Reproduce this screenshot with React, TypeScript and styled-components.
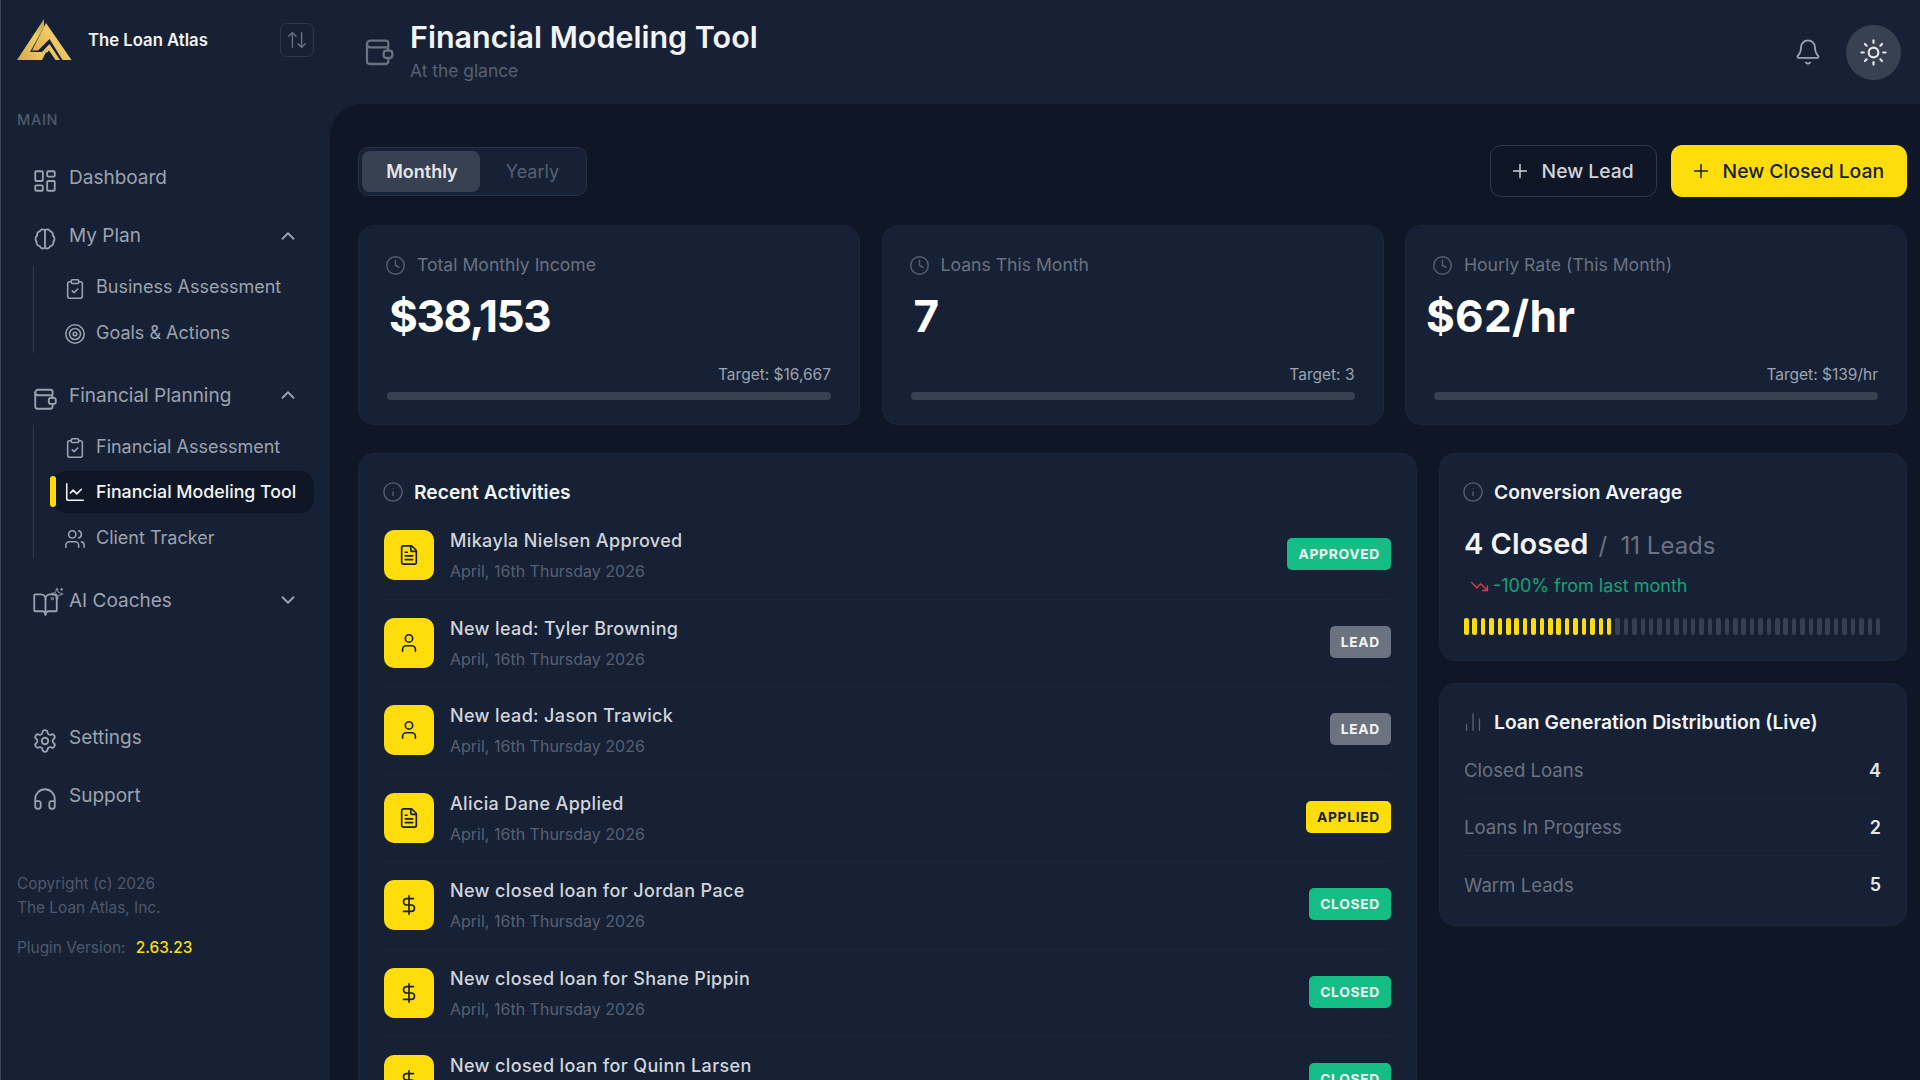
import React from 'react';
import styled, { createGlobalStyle } from 'styled-components';
import {
  LayoutDashboard, ClipboardCheck, Target, ChevronUp, ChevronDown, ChartLine, Users,
  Settings, Headphones, ArrowUpDown, Bell, Sun, Plus, Clock, Info, FileText, User, DollarSign,
  TrendingDown, ChartNoAxesColumn, BookOpen, Sparkles,
} from 'lucide-react';

const Global = createGlobalStyle`
  html, body { margin: 0; padding: 0; height: 100%; overflow: hidden; background: #162135; }
  body { font-family: Inter, "Liberation Sans", sans-serif; }
  * { box-sizing: border-box; }
`;

const Shell = styled.div`
  display: flex; width: 1920px; height: 1080px; overflow: hidden; background: #162135;
  border-left: 1px solid #3a4557;
`;

/* ---------- sidebar ---------- */
const Sidebar = styled.aside`
  width: 329px; flex: none; display: flex; flex-direction: column; padding: 0 16px;
`;
const Brand = styled.div`
  display: flex; align-items: center; height: 80px;
`;
const LogoMark = styled.svg`
  width: 55px; height: 42px; flex: none;
`;
const BrandName = styled.span`
  margin-left: 16px; font-size: 16.7px; font-weight: 600; color: #f3f4f6; flex: 1;
`;
const Toggle = styled.button`
  width: 34px; height: 34px; border: 1px solid #2d3a4e; border-radius: 7px;
  background: transparent; color: #6b7280; display: flex; align-items: center; justify-content: center; padding: 0;
`;
const SectionLabel = styled.div`
  margin-top: 31px; font-size: 14.5px; line-height: 18px; font-weight: 500; letter-spacing: 0.7px; color: #4f5a6c;
`;
const NavList = styled.nav`
  display: flex; flex-direction: column; margin-top: 23px;
`;
const NavRow = styled.div`
  display: flex; align-items: center; height: 58px; padding-left: 15px; color: #9ca3af; font-size: 19px;
  font-weight: 400;
  & > span { flex: 1; margin-left: 11px; margin-top: -7px; }
  & > svg:first-child { flex: none; }
`;
const Caret = styled.div`
  width: 22px; margin-right: 15px; display: flex; color: #9ca3af; margin-top: -7px;
`;
const SubList = styled.div`
  margin-left: 16px; padding-left: 18px; border-left: 1px solid #2d3a4e; display: flex; flex-direction: column;
  gap: 3.5px; margin-top: -2.5px; margin-bottom: 16.5px;
`;
const SubRow = styled.div<{ $active?: boolean }>`
  position: relative; display: flex; align-items: center; gap: 10px; height: 42px; padding-left: 12px;
  font-size: ${(p) => (p.$active ? '17.75px' : '18px')}; border-radius: 14px;
  background: ${(p) => (p.$active ? '#0f1626' : 'transparent')};
  color: ${(p) => (p.$active ? '#f3f4f6' : '#9ca3af')};
  font-weight: ${(p) => (p.$active ? 500 : 400)};
  & > svg { flex: none; margin-top: ${(p) => (p.$active ? '1px' : '4px')}; }
`;
const ActiveBar = styled.i`
  position: absolute; left: -2px; top: 5px; width: 6px; height: 31px; border-radius: 3px; background: #ffdd0a;
`;
const BottomNav = styled.div`
  display: flex; flex-direction: column; margin-top: 79px;
`;
const Legal = styled.div`
  margin-top: 44px; font-size: 15.4px; line-height: 24px; color: #4f5a6c;
`;
const Version = styled.div`
  margin-top: 16px; font-size: 15.4px; line-height: 24px; color: #4f5a6c;
  b { font-weight: 500; color: #ffdd0a; margin-left: 6px; }
`;
const NavGlyph = styled.svg`
  fill: none; stroke: currentColor; stroke-linecap: round; stroke-linejoin: round; flex: none;
`;

/* ---------- main ---------- */
const Main = styled.div`
  flex: 1; min-width: 0; display: flex; flex-direction: column;
`;
const TopBar = styled.header`
  height: 104px; flex: none; display: flex; align-items: center; padding: 0 19px 0 33px; color: #6b7280;
`;
const TitleBlock = styled.div`
  flex: 1; margin-left: 15px; margin-top: -3px;
`;
const Title = styled.h1`
  margin: 0; font-size: 30.5px; line-height: 38px; font-weight: 600; color: #f3f4f6;
`;
const Subtitle = styled.div`
  margin-top: 3px; font-size: 17.4px; line-height: 24px; color: #566072;
`;
const ThemeButton = styled.div`
  width: 55px; height: 55px; border-radius: 50%; background: #374151; color: #e5e7eb;
  display: flex; align-items: center; justify-content: center; margin-left: 24px;
`;
const Content = styled.main`
  flex: 1; min-height: 0; background: #0f1626; border-top-left-radius: 32px; padding: 41px 13px 0 28px;
  overflow: hidden;
`;
const Toolbar = styled.div`
  display: flex; align-items: center; justify-content: space-between; height: 52px;
`;
const Tabs = styled.div`
  width: 229px; height: 49px; border: 1px solid #263247; border-radius: 10px; background: #162135; padding: 3px;
  display: flex; align-items: stretch;
`;
const Tab = styled.div<{ $on?: boolean }>`
  width: ${(p) => (p.$on ? '119px' : '104px')}; border-radius: 8px; display: flex; align-items: center; justify-content: center;
  padding-left: 2px; font-size: 18px; font-weight: ${(p) => (p.$on ? 600 : 400)};
  background: ${(p) => (p.$on ? '#374151' : 'transparent')};
  color: ${(p) => (p.$on ? '#e5e7eb' : '#566072')};
`;
const Actions = styled.div`
  display: flex; gap: 14px;
`;
const ActionBtn = styled.button<{ $primary?: boolean }>`
  height: 52px; display: flex; align-items: center; gap: 11px; padding: 0 22px 0 18px; border-radius: 11px;
  font: 500 19.3px Inter, sans-serif; white-space: nowrap;
  border: 1px solid ${(p) => (p.$primary ? '#ffdd0a' : '#2d3a4e')};
  background: ${(p) => (p.$primary ? '#ffdd0a' : 'transparent')};
  color: ${(p) => (p.$primary ? '#162135' : '#d1d5db')};
`;
const Stats = styled.section`
  display: grid; grid-template-columns: repeat(3, 1fr); gap: 21.5px; margin-top: 28px;
`;
const Card = styled.div`
  background: #162135; border: 1px solid #1c2739; border-radius: 16px;
`;
const StatCard = styled(Card)`
  height: 200px; padding: 28px 28px 0;
`;
const StatLabel = styled.div`
  display: flex; align-items: center; gap: 11px; font-size: 17.6px; line-height: 22px; color: #6b7280;
  & > svg { margin-left: -2px; flex: none; }
`;
const StatValue = styled.div<{ $offset: number; $track: number }>`
  margin-top: 13px; margin-left: ${(p) => p.$offset}px; letter-spacing: ${(p) => p.$track}px;
  font-size: 44px; line-height: 54px; font-weight: 700; color: #fff;
`;
const TargetText = styled.div`
  margin-top: 22px; text-align: right; font-size: 15.5px; line-height: 20px; color: #9ca3af;
`;
const Track = styled.div`
  margin-top: 7px; height: 8px; border-radius: 4px; background: #374151;
`;
const Lower = styled.section`
  display: grid; grid-template-columns: 1059px 1fr; gap: 22px; margin-top: 28px; align-items: start;
`;
const Activities = styled(Card)`
  padding: 25px 25px 0; height: 800px;
`;
const CardHead = styled.div`
  display: flex; align-items: center; gap: 10px; font-size: 19.25px; line-height: 26px; font-weight: 600; color: #f3f4f6;
  & > svg { margin-left: -2px; flex: none; }
`;
const ActivityRow = styled.div`
  height: 87.5px; display: flex; align-items: flex-start; border-bottom: 1px solid #1c2739;
  padding-bottom: 20px;
  & + & { padding-top: 18px; }
  &:first-of-type { height: 69.5px; }
`;
const Rows = styled.div`
  margin-top: 25px;
`;
const Tile = styled.div`
  width: 50px; height: 50px; border-radius: 10px; background: #ffdd0a; color: #162135; flex: none;
  display: flex; align-items: center; justify-content: center;
`;
const ActivityText = styled.div`
  flex: 1; margin-left: 16px; margin-top: -1px;
`;
const ActivityTitle = styled.div`
  font-size: 18px; line-height: 24px; font-weight: 500; letter-spacing: 0.36px; color: #d1d5db;
`;
const ActivityDate = styled.div`
  margin-top: 7px; font-size: 16px; line-height: 22px; color: #566072;
`;
const Badge = styled.span<{ $kind: string }>`
  margin-top: 8px; height: 32px; display: inline-flex; align-items: center; padding: 0 11px; border-radius: 5px;
  font-size: 13.8px; font-weight: 700; letter-spacing: 0.7px;
  background: ${(p) => (p.$kind === 'APPLIED' ? '#ffdd0a' : p.$kind === 'LEAD' ? '#6b7280' : '#14bd84')};
  color: ${(p) => (p.$kind === 'APPLIED' ? '#162135' : '#f3f4f6')};
`;
const Side = styled.div`
  display: flex; flex-direction: column; gap: 22px;
`;
const ConvCard = styled(Card)`
  height: 208px; padding: 25px 25px 0 24px;
`;
const Closed = styled.div`
  display: flex; align-items: baseline; margin-top: 20px; font-size: 29px; line-height: 38px; font-weight: 600; color: #f3f4f6;
  span { margin-left: 10px; font-size: 24px; font-weight: 400; color: #6b7280; }
`;
const Delta = styled.div`
  display: flex; align-items: center; gap: 4px; margin-top: 9px; padding-left: 6px; font-size: 18px; line-height: 24px; color: #11a577;
`;
const Ticks = styled.div`
  margin-top: 20px; display: flex; justify-content: space-between;
`;
const Tick = styled.i<{ $on: boolean }>`
  width: 4.5px; height: 17px; border-radius: 2px; background: ${(p) => (p.$on ? '#ffdd0a' : '#374151')};
`;
const DistCard = styled(Card)`
  height: 243px; padding: 25px 25px 0 24px;
`;
const DistRow = styled.div`
  display: flex; justify-content: space-between; align-items: center; height: 57px; font-size: 18.6px; color: #6b7280;
  border-bottom: 1px solid #1c2739;
  &:last-child { border-bottom: 0; }
  b { font-weight: 600; color: #e5e7eb; font-size: 18px; }
`;
const DistRows = styled.div`
  margin-top: 7px;
`;
const CoachIcon = styled.div`
  position: relative; width: 26px; height: 26px; flex: none; display: flex;
  & > svg:first-child { flex: none; }
  & > svg:last-child { position: absolute; top: -4px; right: -6px; }
`;

const activities = [
  ['Mikayla Nielsen Approved', 'APPROVED', 'doc'],
  ['New lead: Tyler Browning', 'LEAD', 'user'],
  ['New lead: Jason Trawick', 'LEAD', 'user'],
  ['Alicia Dane Applied', 'APPLIED', 'doc'],
  ['New closed loan for Jordan Pace', 'CLOSED', 'money'],
  ['New closed loan for Shane Pippin', 'CLOSED', 'money'],
  ['New closed loan for Quinn Larsen', 'CLOSED', 'money'],
];

const stats = [
  ['Total Monthly Income', '$38,153', 'Target: $16,667', 2, -1.4],
  ['Loans This Month', '7', 'Target: 3', 3, 0],
  ['Hourly Rate (This Month)', '$62/hr', 'Target: $139/hr', -8, 0.3],
] as const;

const Logo = () => (
  <LogoMark viewBox="0 0 55 42">
    <defs>
      <linearGradient id="gold" x1="0" y1="1" x2="1" y2="0">
        <stop offset="0" stopColor="#d8a83f" />
        <stop offset="0.6" stopColor="#f0cc68" />
        <stop offset="1" stopColor="#c99a3a" />
      </linearGradient>
    </defs>
    <path d="M27 0 L0 41 H25 L29 33 H13 L27 8 Z" fill="url(#gold)" />
    <path d="M29 4 L54.5 41 H45.5 L32.5 20 L21 31.5 H15 Z" fill="url(#gold)" />
    <path d="M32.5 25 L43 41 H38.5 L32 31.5 L30 33.5 H24.5 Z" fill="url(#gold)" />
  </LogoMark>
);

const BrainGlyph = () => (
  <NavGlyph width={26} height={26} viewBox="0 0 24 24" strokeWidth={1.7}>
    <path d="M12 4v16" />
    <path d="M12 4c-1.700-1.500-4.300-1-4.800 1C5.500 5.300 4.300 7 4.800 8.800 3 10 2.700 13 4.300 14.400c-.6 2.200 1 4.100 3 4.200.6 2.200 3.200 2.800 4.700 1.400" />
    <path d="M12 4c1.700-1.500 4.300-1 4.800 1 1.700.3 2.900 2 2.400 3.800C21 10 21.300 13 19.700 14.400c.6 2.200-1 4.100-3 4.200-.6 2.200-3.200 2.800-4.700 1.400" />
  </NavGlyph>
);

const WalletGlyph = ({ size }: { size: number }) => (
  <NavGlyph width={size} height={size} viewBox="0 0 24 24" strokeWidth={1.7}>
    <path d="M19 8V5.500a2 2 0 0 0-2-2H5.500A2.500 2.500 0 0 0 3 6v13a2 2 0 0 0 2 2h12a2 2 0 0 0 2-2v-2" />
    <path d="M3 6a2.500 2.500 0 0 0 2.500 2.500H17a2 2 0 0 1 2 2v.5" />
    <rect x="15.500" y="11" width="6.500" height="5.500" rx="2" />
  </NavGlyph>
);

export default function App() {
  return (
    <Shell>
      <Global />
      <Sidebar>
        <Brand>
          <Logo />
          <BrandName>The Loan Atlas</BrandName>
          <Toggle><ArrowUpDown size={22} strokeWidth={1.5} /></Toggle>
        </Brand>
        <SectionLabel>MAIN</SectionLabel>
        <NavList>
          <NavRow><LayoutDashboard size={26} strokeWidth={1.7} /><span>Dashboard</span></NavRow>
          <NavRow><BrainGlyph /><span>My Plan</span><Caret><ChevronUp size={22} /></Caret></NavRow>
          <SubList>
            <SubRow><ClipboardCheck size={22} strokeWidth={1.7} />Business Assessment</SubRow>
            <SubRow><Target size={22} strokeWidth={1.7} />Goals &amp; Actions</SubRow>
          </SubList>
          <NavRow><WalletGlyph size={26} /><span>Financial Planning</span><Caret><ChevronUp size={22} /></Caret></NavRow>
          <SubList>
            <SubRow><ClipboardCheck size={22} strokeWidth={1.7} />Financial Assessment</SubRow>
            <SubRow $active><ActiveBar /><ChartLine size={22} strokeWidth={1.7} />Financial Modeling Tool</SubRow>
            <SubRow><Users size={22} strokeWidth={1.7} />Client Tracker</SubRow>
          </SubList>
          <NavRow>
            <CoachIcon><BookOpen size={27} strokeWidth={1.6} /><Sparkles size={14} strokeWidth={1.6} /></CoachIcon>
            <span>AI Coaches</span><Caret><ChevronDown size={22} /></Caret>
          </NavRow>
        </NavList>
        <BottomNav>
          <NavRow><Settings size={26} strokeWidth={1.7} /><span>Settings</span></NavRow>
          <NavRow><Headphones size={26} strokeWidth={1.7} /><span>Support</span></NavRow>
        </BottomNav>
        <Legal>Copyright (c) 2026<br />The Loan Atlas, Inc.</Legal>
        <Version>Plugin Version: <b>2.63.23</b></Version>
      </Sidebar>
      <Main>
        <TopBar>
          <WalletGlyph size={32} />
          <TitleBlock>
            <Title>Financial Modeling Tool</Title>
            <Subtitle>At the glance</Subtitle>
          </TitleBlock>
          <Bell size={28} strokeWidth={1.6} color="#9ca3af" />
          <ThemeButton><Sun size={29} strokeWidth={1.8} /></ThemeButton>
        </TopBar>
        <Content>
          <Toolbar>
            <Tabs><Tab $on>Monthly</Tab><Tab>Yearly</Tab></Tabs>
            <Actions>
              <ActionBtn><Plus size={22} strokeWidth={1.6} />New Lead</ActionBtn>
              <ActionBtn $primary><Plus size={22} strokeWidth={1.6} />New Closed Loan</ActionBtn>
            </Actions>
          </Toolbar>
          <Stats>
            {stats.map(([l, v, t, o, k]) => (
              <StatCard key={l}>
                <StatLabel><Clock size={21} strokeWidth={1.6} color="#566072" />{l}</StatLabel>
                <StatValue $offset={o} $track={k}>{v}</StatValue>
                <TargetText>{t}</TargetText>
                <Track />
              </StatCard>
            ))}
          </Stats>
          <Lower>
            <Activities>
              <CardHead><Info size={22} strokeWidth={1.5} color="#566072" />Recent Activities</CardHead>
              <Rows>
                {activities.map(([name, kind, ic]) => (
                  <ActivityRow key={name}>
                    <Tile>
                      {ic === 'doc' ? <FileText size={22} strokeWidth={1.8} /> : ic === 'user' ? <User size={22} strokeWidth={1.8} /> : <DollarSign size={22} strokeWidth={1.8} />}
                    </Tile>
                    <ActivityText>
                      <ActivityTitle>{name}</ActivityTitle>
                      <ActivityDate>April, 16th Thursday 2026</ActivityDate>
                    </ActivityText>
                    <Badge $kind={kind}>{kind}</Badge>
                  </ActivityRow>
                ))}
              </Rows>
            </Activities>
            <Side>
              <ConvCard>
                <CardHead><Info size={22} strokeWidth={1.5} color="#566072" />Conversion Average</CardHead>
                <Closed>4 Closed<span>/ &nbsp;11 Leads</span></Closed>
                <Delta><TrendingDown size={19} strokeWidth={1.8} color="#dc3c44" />-100% from last month</Delta>
                <Ticks>
                  {Array.from({ length: 50 }, (_, i) => <Tick key={i} $on={i < 18} />)}
                </Ticks>
              </ConvCard>
              <DistCard>
                <CardHead><ChartNoAxesColumn size={22} strokeWidth={1.5} color="#566072" />Loan Generation Distribution (Live)</CardHead>
                <DistRows>
                  <DistRow>Closed Loans<b>4</b></DistRow>
                  <DistRow>Loans In Progress<b>2</b></DistRow>
                  <DistRow>Warm Leads<b>5</b></DistRow>
                </DistRows>
              </DistCard>
            </Side>
          </Lower>
        </Content>
      </Main>
    </Shell>
  );
}
